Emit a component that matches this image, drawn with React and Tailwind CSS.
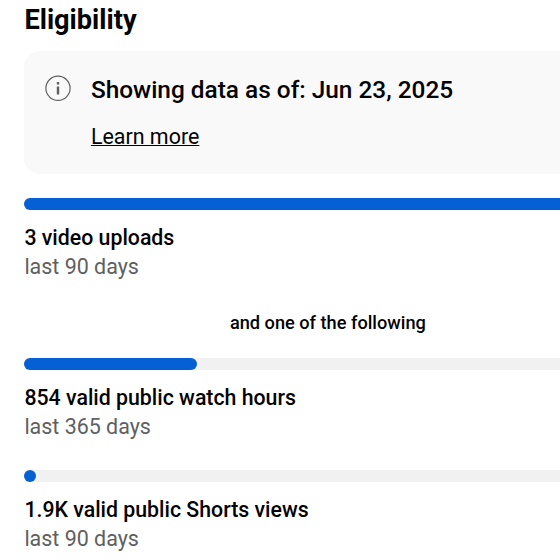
import React from 'react'

const requirements = [
  { title: '3 video uploads', period: 'last 90 days', width: 560 },
  { title: '854 valid public watch hours', period: 'last 365 days', width: 173 },
  { title: '1.9K valid public Shorts views', period: 'last 90 days', width: 12 },
]

const Requirement = ({ item }) => {
  return (
    <div>
      <div className="h-3 w-[600px] rounded-full bg-[#f1f1f1]">
        <div className="h-3 rounded-full bg-[#065fd4]" style={{ width: item.width }}></div>
      </div>
      <p className="mt-[13px] text-[21.3px] leading-[29px] font-medium">{item.title}</p>
      <p className="text-[21.45px] leading-[29px] text-[#606060]">{item.period}</p>
    </div>
  )
}

const App = () => {
  return (
    <div className="h-[560px] w-[560px] overflow-hidden bg-white pl-[24.4px] font-[Roboto,sans-serif] text-[#030303]">
      <h2 className="pt-[3px] text-[27.2px] leading-[34px] font-bold">Eligibility</h2>
      <div className="mt-[14px] flex h-[123px] w-[600px] rounded-2xl bg-[#f9f9f9] pt-[23px] pl-[19.3px]">
        <svg className="h-7 w-7 shrink-0" viewBox="0 0 28 28" fill="none">
          <circle cx="14" cy="14.3" r="12.1" stroke="#606060" strokeWidth="1.2" />
          <path d="M14 12.6v8M14 8v2.6" stroke="#606060" strokeWidth="2.4" />
        </svg>
        <div className="ml-[19.2px]">
          <p className="text-[24.4px] leading-8 font-medium">Showing data as of: Jun 23, 2025</p>
          <a className="mt-[15px] block text-[21.45px] leading-8 underline decoration-1">Learn more</a>
        </div>
      </div>
      <div className="mt-6">
        <Requirement item={requirements[0]} />
      </div>
      <p className="mt-[30px] ml-[205.5px] text-[18.2px] leading-6 font-medium">and one of the following</p>
      <div className="mt-[23.4px] flex flex-col gap-[28.8px]">
        <Requirement item={requirements[1]} />
        <Requirement item={requirements[2]} />
      </div>
    </div>
  )
}

export default App
